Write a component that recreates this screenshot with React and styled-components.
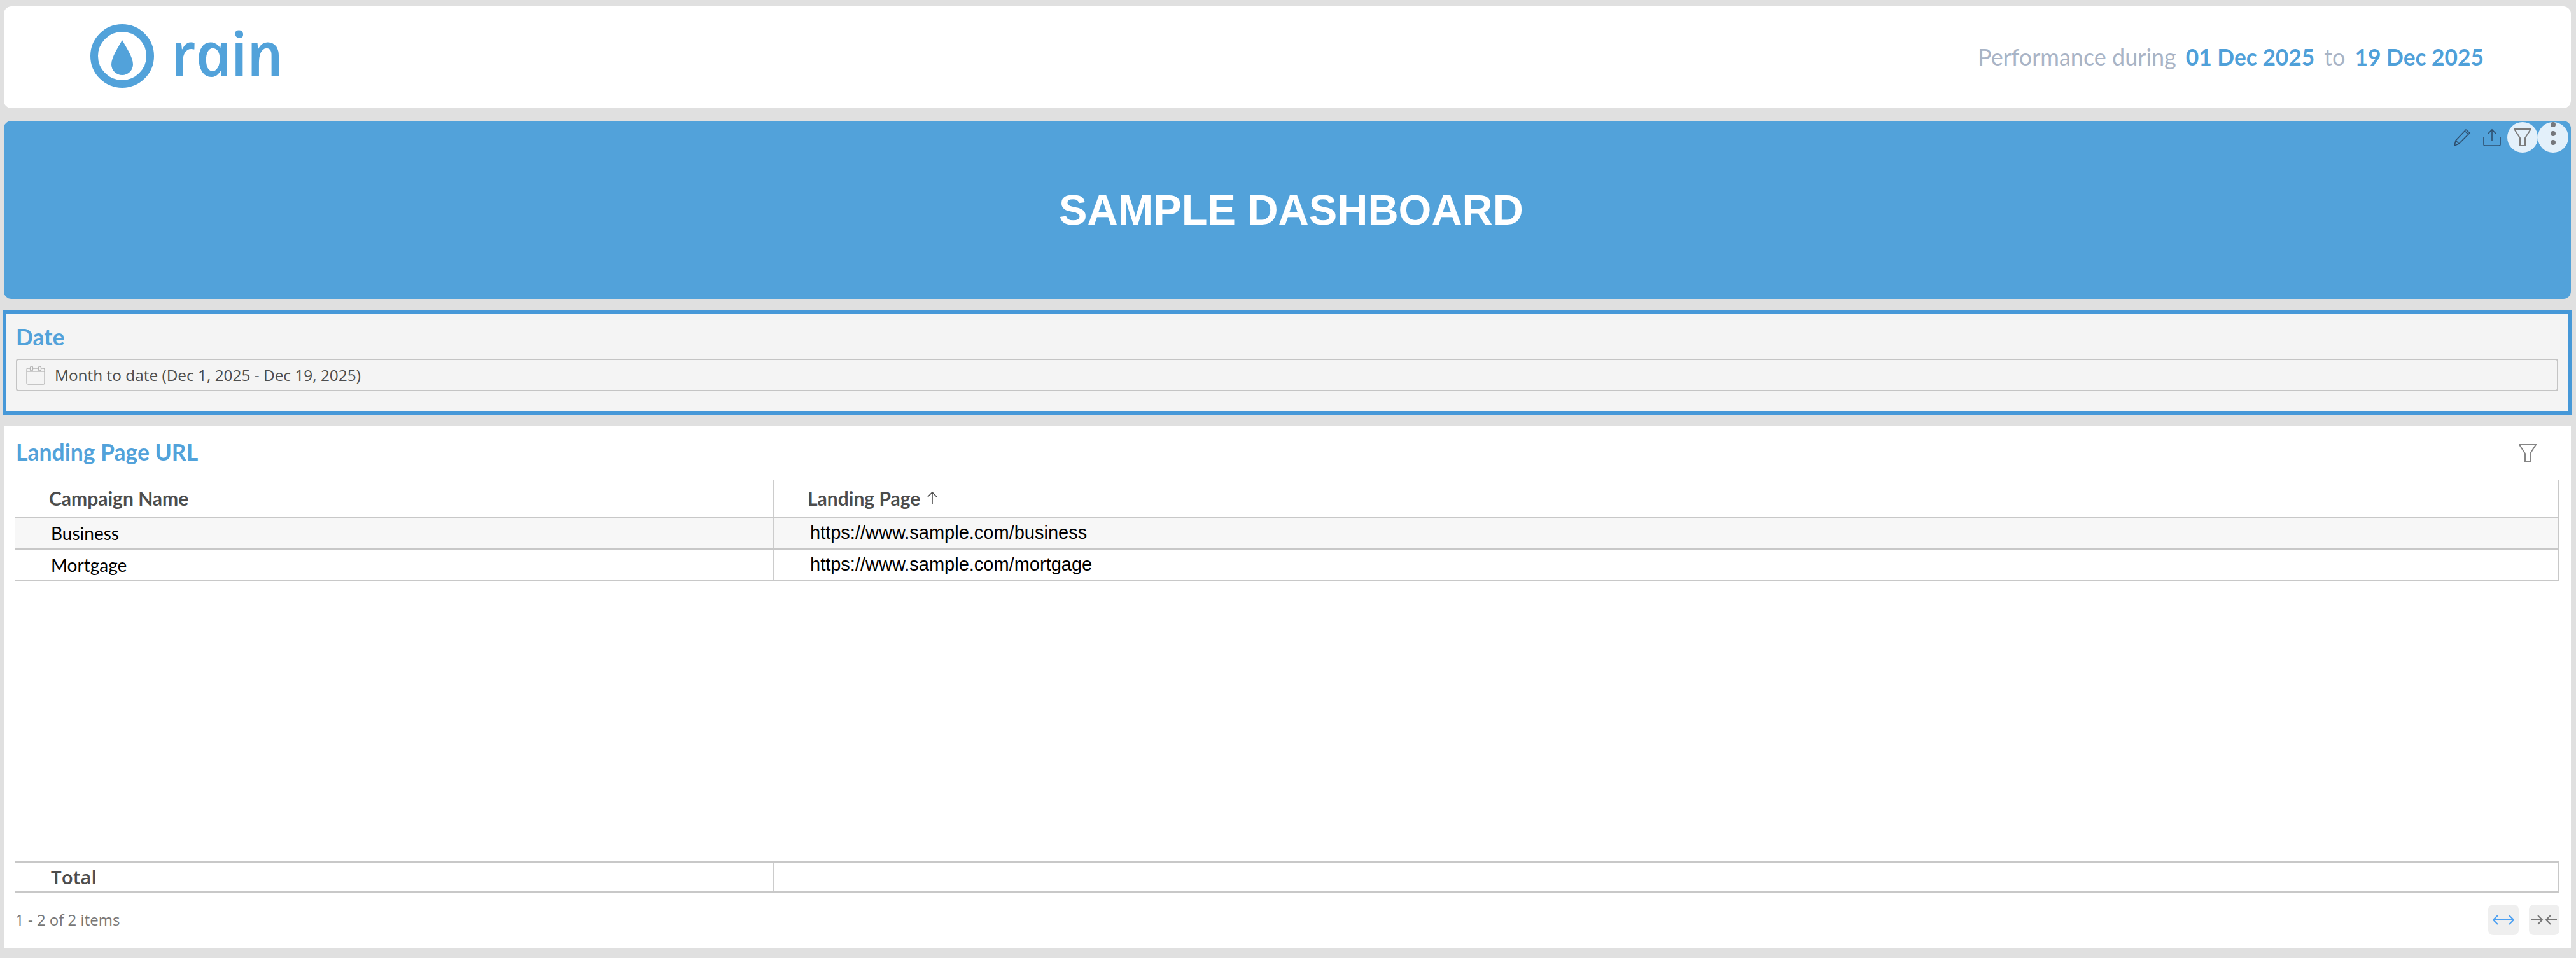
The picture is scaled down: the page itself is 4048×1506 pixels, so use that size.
import React from 'react';
import styled, { createGlobalStyle } from 'styled-components';

const GlobalStyle = createGlobalStyle`
  html, body {
    margin: 0;
    padding: 0;
    background: #e0e0e0;
  }
  * {
    box-sizing: border-box;
  }
`;

const Page = styled.div`
  height: 1506px;
  padding: 10px 8px 16px 6px;
  display: flex;
  flex-direction: column;
  gap: 20px;
  overflow: hidden;
  font-family: Lato, sans-serif;
`;

const Header = styled.header`
  height: 160px;
  flex: none;
  background: #fff;
  border-radius: 12px;
  padding: 28px 137px 0 136px;
  display: flex;
  justify-content: space-between;
`;

const Logo = styled.div`
  display: flex;
  align-items: flex-start;
  gap: 24px;
`;

const LogoText = styled.span`
  display: inline-block;
  font-family: "Open Sans", sans-serif;
  font-style: italic;
  font-size: 97px;
  font-weight: 600;
  line-height: 88px;
  letter-spacing: -1px;
  color: #52a2da;
  transform: skewX(12deg);
`;

const Period = styled.div`
  display: flex;
  align-items: center;
  height: 102px;
  font-size: 36px;
  color: #a9b4c6;
  gap: 15px;
`;

const PeriodDate = styled.span`
  font-size: 35.3px;
  font-weight: 700;
  color: #4fa0d9;
  &:first-of-type {
    margin-left: 8px;
  }
`;

const Banner = styled.section`
  position: relative;
  height: 280px;
  flex: none;
  background: #52a2da;
  border-radius: 12px;
  padding-left: 12px;
  display: flex;
  align-items: center;
  justify-content: center;
`;

const BannerTitle = styled.h1`
  margin: 0;
  font-family: "Liberation Sans", Arial, sans-serif;
  font-size: 66.7px;
  font-weight: 700;
  color: #fff;
`;

const Toolbar = styled.div`
  position: absolute;
  top: 2px;
  right: 4px;
  display: flex;
`;

const ToolButton = styled.div`
  width: ${(p) => p.$width || 48}px;
  height: 48px;
  display: flex;
  align-items: center;
  justify-content: center;
  border-radius: 50%;
  background: ${(p) => (p.$round ? '#e3f0fa' : 'transparent')};
`;

const DateBox = styled.section`
  height: 164px;
  flex: none;
  margin: -2px -2px;
  border: 6px solid #4698d8;
  background: #f4f4f4;
  padding: 15px 16px 0 15px;
`;

const PanelTitle = styled.h2`
  margin: 0;
  font-size: 35.5px;
  font-weight: 700;
  line-height: 42px;
  color: #52a2da;
`;

const DateSelect = styled.div`
  margin-top: 13px;
  height: 51px;
  border: 2px solid #c4c4c4;
  border-radius: 4px;
  padding: 0 0 0 14px;
  display: flex;
  align-items: center;
  gap: 15px;
  font-family: "Open Sans", sans-serif;
  font-size: 24.4px;
  color: #4d4d4d;
`;

const TableCard = styled.section`
  flex: 1;
  min-height: 0;
  background: #fff;
  padding: 0 18px;
  display: flex;
  flex-direction: column;
`;

const TableTop = styled.div`
  height: 84px;
  flex: none;
  padding: 20px 36px 0 1px;
  display: flex;
  justify-content: space-between;
  align-items: flex-start;
`;

const TableFilter = styled.div`
  margin-top: 8px;
  height: 28px;
`;

const Row = styled.div`
  display: grid;
  grid-template-columns: 1191px 1fr;
  flex: none;
  height: ${(p) => p.$height}px;
  background: ${(p) => p.$bg || '#fff'};
  border-right: 2px solid #c8c8c8;
  border-bottom: ${(p) => p.$bottom || 2}px solid #c8c8c8;
  border-top: ${(p) => (p.$top ? '2px solid #c8c8c8' : 'none')};
`;

const Cell = styled.div`
  display: flex;
  align-items: center;
  padding-left: ${(p) => p.$pad}px;
  border-left: ${(p) => (p.$divider ? '1px solid #ccc' : 'none')};
  color: #000;
  font-size: 28px;
  font-family: Lato, sans-serif;
`;

const HeadCell = styled(Cell)`
  font-size: 30px;
  font-weight: 700;
  color: #4d4d4d;
  gap: 10px;
`;

const UrlCell = styled(Cell)`
  font-family: "Liberation Sans", Arial, sans-serif;
  font-size: 29px;
  padding-bottom: 2px;
`;

const TotalCell = styled(Cell)`
  font-family: "Open Sans", sans-serif;
  font-weight: 600;
  font-size: 29.5px;
  color: #4d4d4d;
`;

const Spacer = styled.div`
  flex: 1;
`;

const Footer = styled.footer`
  height: 86px;
  flex: none;
  padding-top: 18px;
  display: flex;
  justify-content: space-between;
  align-items: flex-start;
`;

const ItemCount = styled.span`
  font-family: "Open Sans", sans-serif;
  font-size: 24px;
  line-height: 48px;
  color: #777;
`;

const FitButtons = styled.div`
  display: flex;
  gap: 16px;
`;

const FitButton = styled.div`
  width: 48px;
  height: 48px;
  background: #efefef;
  border-radius: 8px;
  display: flex;
  align-items: center;
  justify-content: center;
`;

const DropLogo = () => (
  <svg width="100" height="100" viewBox="0 0 100 100">
    <circle cx="50" cy="50" r="44" fill="none" stroke="#52a2da" strokeWidth="12" />
    <path
      d="M50 25 C44 36 33 52 33 63 C33 73 41 80 50 80 C59 80 67 73 67 63 C67 52 56 36 50 25 Z"
      fill="#52a2da"
    />
  </svg>
);

const FunnelIcon = ({ color = '#7b7b7b' }) => (
  <svg width="28" height="28" viewBox="0 0 28 28" fill="none" stroke={color} strokeWidth="2">
    <path d="M1 1 H27 L18 15 V27 H10 V15 Z" />
  </svg>
);

const PencilIcon = () => (
  <svg width="28" height="28" viewBox="0 0 28 28" fill="none" stroke="#2e4f6e" strokeWidth="1.6">
    <path d="M2 27 L4 19 L20 2 L26 7 L9 24 Z M4 19 L9 24 M18 4 L24 9" />
  </svg>
);

const UploadIcon = () => (
  <svg width="28" height="28" viewBox="0 0 28 28" fill="none" stroke="#2e4f6e" strokeWidth="1.6">
    <path d="M1 13 V25 Q1 27 3 27 H25 Q27 27 27 25 V13 M14 20 V2 M7 9 L14 2 L21 9" />
  </svg>
);

const KebabIcon = () => (
  <svg width="10" height="48" viewBox="0 0 10 48" fill="#75777c">
    <circle cx="5" cy="4" r="4" />
    <circle cx="5" cy="18" r="4" />
    <circle cx="5" cy="32" r="4" />
  </svg>
);

const CalendarIcon = () => (
  <svg width="30" height="30" viewBox="0 0 30 30" fill="none" stroke="#b5b5b5" strokeWidth="1.3">
    <rect x="1" y="4" width="28" height="25" rx="2" />
    <path d="M1 9 H29" />
    <rect x="6.5" y="1" width="4" height="7" rx="2" fill="#f4f4f4" />
    <rect x="19.5" y="1" width="4" height="7" rx="2" fill="#f4f4f4" />
  </svg>
);

const SortArrow = () => (
  <svg width="18" height="22" viewBox="0 0 18 22" fill="none" stroke="#4d4d4d" strokeWidth="1.6">
    <path d="M9 21 V2 M2 9 L9 2 L16 9" />
  </svg>
);

const ExpandIcon = () => (
  <svg width="34" height="16" viewBox="0 0 34 16" fill="none" stroke="#4ea1f2" strokeWidth="2">
    <path d="M1 8 H33 M8 1 L1 8 L8 15 M26 1 L33 8 L26 15" />
  </svg>
);

const CollapseIcon = () => (
  <svg width="40" height="16" viewBox="0 0 40 16" fill="none" stroke="#777" strokeWidth="2">
    <path d="M0 8 H16 M10 1 L17 8 L10 15 M40 8 H24 M30 1 L23 8 L30 15" />
  </svg>
);

const rows = [
  { name: 'Business', url: 'https://www.sample.com/business', bg: '#f7f7f7' },
  { name: 'Mortgage', url: 'https://www.sample.com/mortgage' },
];

const App = () => (
  <>
    <GlobalStyle />
    <Page>
      <Header>
        <Logo>
          <DropLogo />
          <LogoText>rain</LogoText>
        </Logo>
        <Period>
          <span>Performance during</span>
          <PeriodDate>01 Dec 2025</PeriodDate>
          <span>to</span>
          <PeriodDate>19 Dec 2025</PeriodDate>
        </Period>
      </Header>

      <Banner>
        <BannerTitle>SAMPLE DASHBOARD</BannerTitle>
        <Toolbar>
          <ToolButton $width={46}><PencilIcon /></ToolButton>
          <ToolButton><UploadIcon /></ToolButton>
          <ToolButton $round><FunnelIcon /></ToolButton>
          <ToolButton $round><KebabIcon /></ToolButton>
        </Toolbar>
      </Banner>

      <DateBox>
        <PanelTitle>Date</PanelTitle>
        <DateSelect>
          <CalendarIcon />
          <span>Month to date (Dec 1, 2025 - Dec 19, 2025)</span>
        </DateSelect>
      </DateBox>

      <TableCard>
        <TableTop>
          <PanelTitle>Landing Page URL</PanelTitle>
          <TableFilter>
            <FunnelIcon color="#858585" />
          </TableFilter>
        </TableTop>
        <Row $height={60}>
          <HeadCell $pad={53}>Campaign Name</HeadCell>
          <HeadCell $pad={53} $divider>
            Landing Page <SortArrow />
          </HeadCell>
        </Row>
        {rows.map((row) => (
          <Row key={row.name} $height={50} $bg={row.bg}>
            <Cell $pad={56}>{row.name}</Cell>
            <UrlCell $pad={57} $divider>{row.url}</UrlCell>
          </Row>
        ))}
        <Spacer />
        <Row $height={50} $top $bottom={4}>
          <TotalCell $pad={56}>Total</TotalCell>
          <Cell $divider />
        </Row>
        <Footer>
          <ItemCount>1 - 2 of 2 items</ItemCount>
          <FitButtons>
            <FitButton><ExpandIcon /></FitButton>
            <FitButton><CollapseIcon /></FitButton>
          </FitButtons>
        </Footer>
      </TableCard>
    </Page>
  </>
);

export default App;
